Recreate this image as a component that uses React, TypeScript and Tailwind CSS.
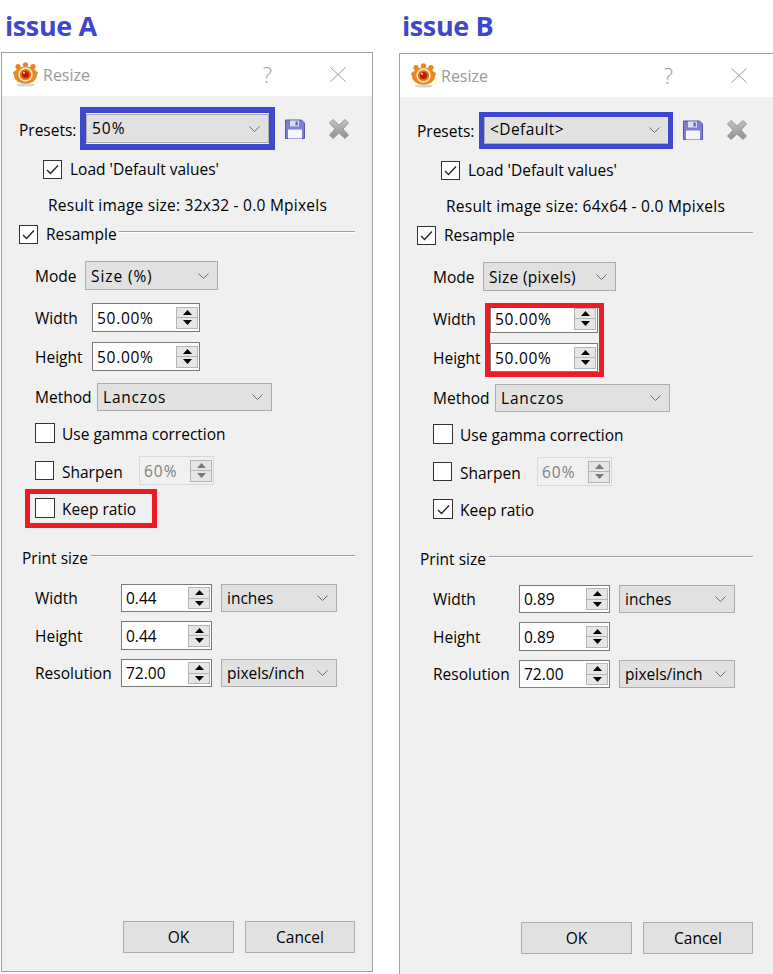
import React from "react";

const FONT = "font-['Open_Sans','Noto_Sans',sans-serif]";

function Chevron() {
  return (
    <svg width="11" height="6" viewBox="0 0 11 6" className="shrink-0">
      <path d="M0.5 0.5 L5.5 5.5 L10.5 0.5" fill="none" stroke="#6a6a6a" strokeWidth="1" />
    </svg>
  );
}

function Combo({ w, text, h = "h-[29px]", track = "", flat }: { w: string; text: string; h?: string; track?: string; flat?: boolean }) {
  return (
    <div className={`${w} ${h} flex items-center justify-between border border-[#adadad] bg-[#e1e1e1] pl-[5px] pr-[8px] shrink-0`}>
      <span className={`whitespace-nowrap ${flat ? "" : "pt-[2px]"} ${track}`}>{text}</span>
      <Chevron />
    </div>
  );
}

function Spin({ w, text, disabled, h = "h-[29px]", track = "" }: { w: string; text: string; disabled?: boolean; h?: string; track?: string }) {
  const c = disabled ? "#7a7a7a" : "#000";
  return (
    <div className={`${w} ${h} flex items-center justify-between border shrink-0 pl-[4px] pr-[1px] ${disabled ? "border-[#d9d9d9] bg-[#f0f0f0] text-[#7f7f7f]" : "border-[#7a7a7a] bg-white"}`}>
      <span className={`pt-[2px] ${track}`}>{text}</span>
      <div className="w-[22px] h-[22px] flex flex-col border border-[#b5b5b5] bg-[#e6e6e6]">
        <div className="flex-1 flex items-center justify-center border-b border-[#b5b5b5]">
          <svg width="9" height="5" viewBox="0 0 9 5"><path d="M4.5 0 L9 5 L0 5 Z" fill={c} /></svg>
        </div>
        <div className="flex-1 flex items-center justify-center">
          <svg width="9" height="5" viewBox="0 0 9 5"><path d="M0 0 L9 0 L4.5 5 Z" fill={c} /></svg>
        </div>
      </div>
    </div>
  );
}

function Check({ checked, size = "w-[19px] h-[19px]" }: { checked?: boolean; size?: string }) {
  return (
    <div className={`${size} shrink-0 border border-[#333] bg-white flex items-center justify-center`}>
      {checked && (
        <svg width="13" height="11" viewBox="0 0 13 11">
          <path d="M1 6 L4.5 9.5 L12 1.5" fill="none" stroke="#222" strokeWidth="1.3" />
        </svg>
      )}
    </div>
  );
}

function Rule({ lift }: { lift: string }) {
  return (
    <div className={`flex-1 flex flex-col ${lift}`}>
      <div className="h-px bg-[#a0a0a0]" />
      <div className="h-px bg-white" />
    </div>
  );
}

function Logo() {
  return (
    <svg width="25" height="25" viewBox="0 0 25 25" className="shrink-0">
      <ellipse cx="12.5" cy="23" rx="9" ry="1.6" fill="#d6d6d6" />
      <g fill="#e8851c">
        <circle cx="5" cy="4.5" r="2.6" />
        <circle cx="12.5" cy="2.8" r="2.6" />
        <circle cx="20" cy="4.5" r="2.6" />
        <circle cx="1.8" cy="11" r="1.8" />
        <circle cx="23.2" cy="11" r="1.8" />
      </g>
      <ellipse cx="12.5" cy="13" rx="11.5" ry="8.8" fill="#ea8a1e" />
      <circle cx="12.5" cy="12.5" r="7.2" fill="#fbe6c8" />
      <circle cx="12.5" cy="12.5" r="5.6" fill="#dd7414" />
      <circle cx="12.5" cy="12.5" r="3.6" fill="#b81a0a" />
      <circle cx="11" cy="10.8" r="1.1" fill="#f7c9a0" />
    </svg>
  );
}

function SaveIcon() {
  return (
    <svg width="20" height="20" viewBox="0 0 20 20" className="shrink-0">
      <path d="M0.5 1 H16.5 L19.5 4 V19.5 H0.5 Z" fill="#7b80d0" stroke="#5257ad" />
      <rect x="5" y="1.5" width="9" height="6" fill="#dcdef2" />
      <rect x="10.5" y="2.5" width="2.2" height="4" fill="#5a5fb8" />
      <rect x="3" y="10.5" width="14" height="9" fill="#f6f6fc" />
    </svg>
  );
}

function DeleteIcon({ id }: { id: string }) {
  return (
    <svg width="20" height="20" viewBox="0 0 20 20" className="shrink-0">
      <defs>
        <linearGradient id={id} x1="0" y1="0" x2="0" y2="1">
          <stop offset="0" stopColor="#c4c4c4" />
          <stop offset="1" stopColor="#8f8f8f" />
        </linearGradient>
      </defs>
      <path d="M4 0.5 L10 6 L16 0.5 L19.5 4 L14 10 L19.5 16 L16 19.5 L10 14 L4 19.5 L0.5 16 L6 10 L0.5 4 Z" fill={`url(#${id})`} stroke="#9a9a9a" />
    </svg>
  );
}

function Row({ className, children }: { className: string; children: React.ReactNode }) {
  return <div className={`flex items-center ${className}`}>{children}</div>;
}

function Label({ w, text }: { w: string; text: string }) {
  return <span className={`${w} shrink-0 whitespace-nowrap pt-[2px]`}>{text}</span>;
}

type DialogProps = {
  id: string;
  title: string;
  shellClass: string;
  headClass: string;
  boxClass: string;
  ruleEnd: string;
  preset: string;
  presetTrack: string;
  presetW: string;
  presetGap: string;
  result: string;
  mode: string;
  modeTrack: string;
  keep: boolean;
  print: string;
  overlay: React.ReactNode;
};

function Dialog(p: DialogProps) {
  return (
    <div className={`${p.shellClass} flex flex-col`}>
      <h2 className={`shrink-0 pt-[6px] text-[27px] leading-[40px] font-bold tracking-[-0.4px] text-[#3f48cc] ${p.headClass}`}>{p.title}</h2>
      <div className={`relative flex-1 flex flex-col border-[#a0a0a0] bg-[#f0f0f0] text-[15.5px] text-black ${p.boxClass}`}>
        <div className="h-[43px] shrink-0 bg-white flex items-center pl-[11px] pr-[26px]">
          <Logo />
          <span className="ml-[5px] text-[16px] text-[#9a9a9a]">Resize</span>
          <span className="ml-auto mr-[58px] text-[#a0a0a0] text-[22px] font-light">?</span>
          <svg width="16" height="15" viewBox="0 0 16 15"><path d="M0.5 0.5 L15.5 14.5 M15.5 0.5 L0.5 14.5" stroke="#9a9a9a" fill="none" /></svg>
        </div>

        <Row className="h-[29px] mt-[18px] pl-[17px]">
          <span className="w-[67px] shrink-0 pt-[5px]">Presets:</span>
          <Combo w={p.presetW} text={p.preset} track={p.presetTrack} flat />
          <div className={p.presetGap} />
          <SaveIcon />
          <div className="w-[24px]" />
          <DeleteIcon id={p.id} />
        </Row>

        <Row className="h-[19px] mt-[17px] pl-[41px] gap-[8px]">
          <Check checked /> <span>Load 'Default values'</span>
        </Row>
        <div className="h-[24px] mt-[14px] pl-[46px] leading-[24px] tracking-[0.24px]">{p.result}</div>

        <Row className="h-[19px] mt-[8px] pl-[17px]">
          <Check checked />
          <span className="ml-[8px] mr-[2px]">Resample</span>
          <Rule lift="mb-[5px]" />
          <div className={p.ruleEnd} />
        </Row>

        <Row className="h-[29px] mt-[17px] pl-[33px]">
          <Label w="w-[50px]" text="Mode" />
          <Combo w="w-[133px]" text={p.mode} track={p.modeTrack} />
        </Row>
        <Row className="h-[29px] mt-[13px] pl-[33px]">
          <Label w="w-[57px]" text="Width" />
          <Spin w="w-[108px]" text="50.00%" track="tracking-[0.7px]" />
        </Row>
        <Row className="h-[29px] mt-[10px] pl-[33px]">
          <Label w="w-[57px]" text="Height" />
          <Spin w="w-[108px]" text="50.00%" track="tracking-[0.7px]" />
        </Row>
        <Row className="h-[28px] mt-[12px] pl-[33px]">
          <Label w="w-[62px]" text="Method" />
          <Combo w="w-[175px]" text="Lanczos" h="h-[28px]" track="tracking-[0.8px]" />
        </Row>
        <Row className="h-[20px] mt-[12px] pl-[33px] gap-[7px]">
          <Check size="w-[20px] h-[20px]" /> <span className="pt-[4px]">Use gamma correction</span>
        </Row>
        <Row className="h-[29px] mt-[13px] pl-[33px]">
          <Check />
          <span className="ml-[8px] w-[77px] pt-[4px]">Sharpen</span>
          <Spin w="w-[75px]" text="60%" disabled track="tracking-[1px]" />
        </Row>
        <Row className="h-[20px] mt-[13px] pl-[33px] gap-[7px]">
          <Check checked={p.keep} size="w-[20px] h-[20px]" /> <span className="pt-[4px]">Keep ratio</span>
        </Row>

        <Row className="h-[24px] mt-[28px] pl-[20px]">
          <span className="mr-[3px] pt-[2px]">Print size</span>
          <Rule lift="mb-[4px]" />
          <div className={p.ruleEnd} />
        </Row>

        <Row className="h-[28px] mt-[14px] pl-[33px]">
          <Label w="w-[86px]" text="Width" />
          <Spin w="w-[91px]" h="h-[28px]" text={p.print} />
          <div className="w-[9px]" />
          <Combo w="w-[116px]" h="h-[28px]" text="inches" />
        </Row>
        <Row className="h-[29px] mt-[9px] pl-[33px]">
          <Label w="w-[86px]" text="Height" />
          <Spin w="w-[91px]" text={p.print} />
        </Row>
        <Row className="h-[28px] mt-[9px] pl-[33px]">
          <Label w="w-[86px]" text="Resolution" />
          <Spin w="w-[91px]" h="h-[28px]" text="72.00" />
          <div className="w-[9px]" />
          <Combo w="w-[116px]" h="h-[28px]" text="pixels/inch" />
        </Row>

        <div className="mt-[234px] flex gap-[11px] pl-[121px]">
          <button className="w-[111px] h-[32px] pt-[2px] border border-[#adadad] bg-[#e1e1e1]">OK</button>
          <button className="w-[110px] h-[32px] pt-[2px] border border-[#adadad] bg-[#e1e1e1]">Cancel</button>
        </div>

        {p.overlay}
      </div>
    </div>
  );
}

export default function App() {
  return (
    <div className={`w-[773px] h-[974px] bg-white flex overflow-hidden ${FONT}`}>
      <Dialog
        id="delA"
        title="issue A"
        shellClass="w-[372px] ml-px h-[972px]"
        headClass="h-[52px] pl-[4px]"
        boxClass="border"
        ruleEnd="w-[17px]"
        preset="50%"
        presetTrack="tracking-[1px]"
        presetW="w-[183px]"
        presetGap="w-[16px]"
        result="Result image size: 32x32 - 0.0 Mpixels"
        mode="Size (%)"
        modeTrack="tracking-[0.9px]"
        keep={false}
        print="0.44"
        overlay={
          <>
            <div className="absolute left-[78px] top-[54px] w-[195px] h-[43px] border-[6px] border-[#3f48cc]" />
            <div className="absolute left-[23px] top-[436px] w-[132px] h-[39px] border-[5px] border-[#ed1c24]" />
          </>
        }
      />
      <Dialog
        id="delB"
        title="issue B"
        shellClass="w-[374px] ml-[26px] h-[974px]"
        headClass="h-[53px] pl-[3px]"
        boxClass="border-l border-t"
        ruleEnd="w-[20px]"
        preset="<Default>"
        presetTrack="tracking-[0.4px]"
        presetW="w-[185px]"
        presetGap="w-[14px]"
        result="Result image size: 64x64 - 0.0 Mpixels"
        mode="Size (pixels)"
        modeTrack="tracking-[0.3px]"
        keep={true}
        print="0.89"
        overlay={
          <>
            <div className="absolute left-[79px] top-[58px] w-[194px] h-[37px] border-[5px] border-[#3f48cc]" />
            <div className="absolute left-[85px] top-[249px] w-[119px] h-[74px] border-[5px] border-[#ed1c24]" />
          </>
        }
      />
    </div>
  );
}
